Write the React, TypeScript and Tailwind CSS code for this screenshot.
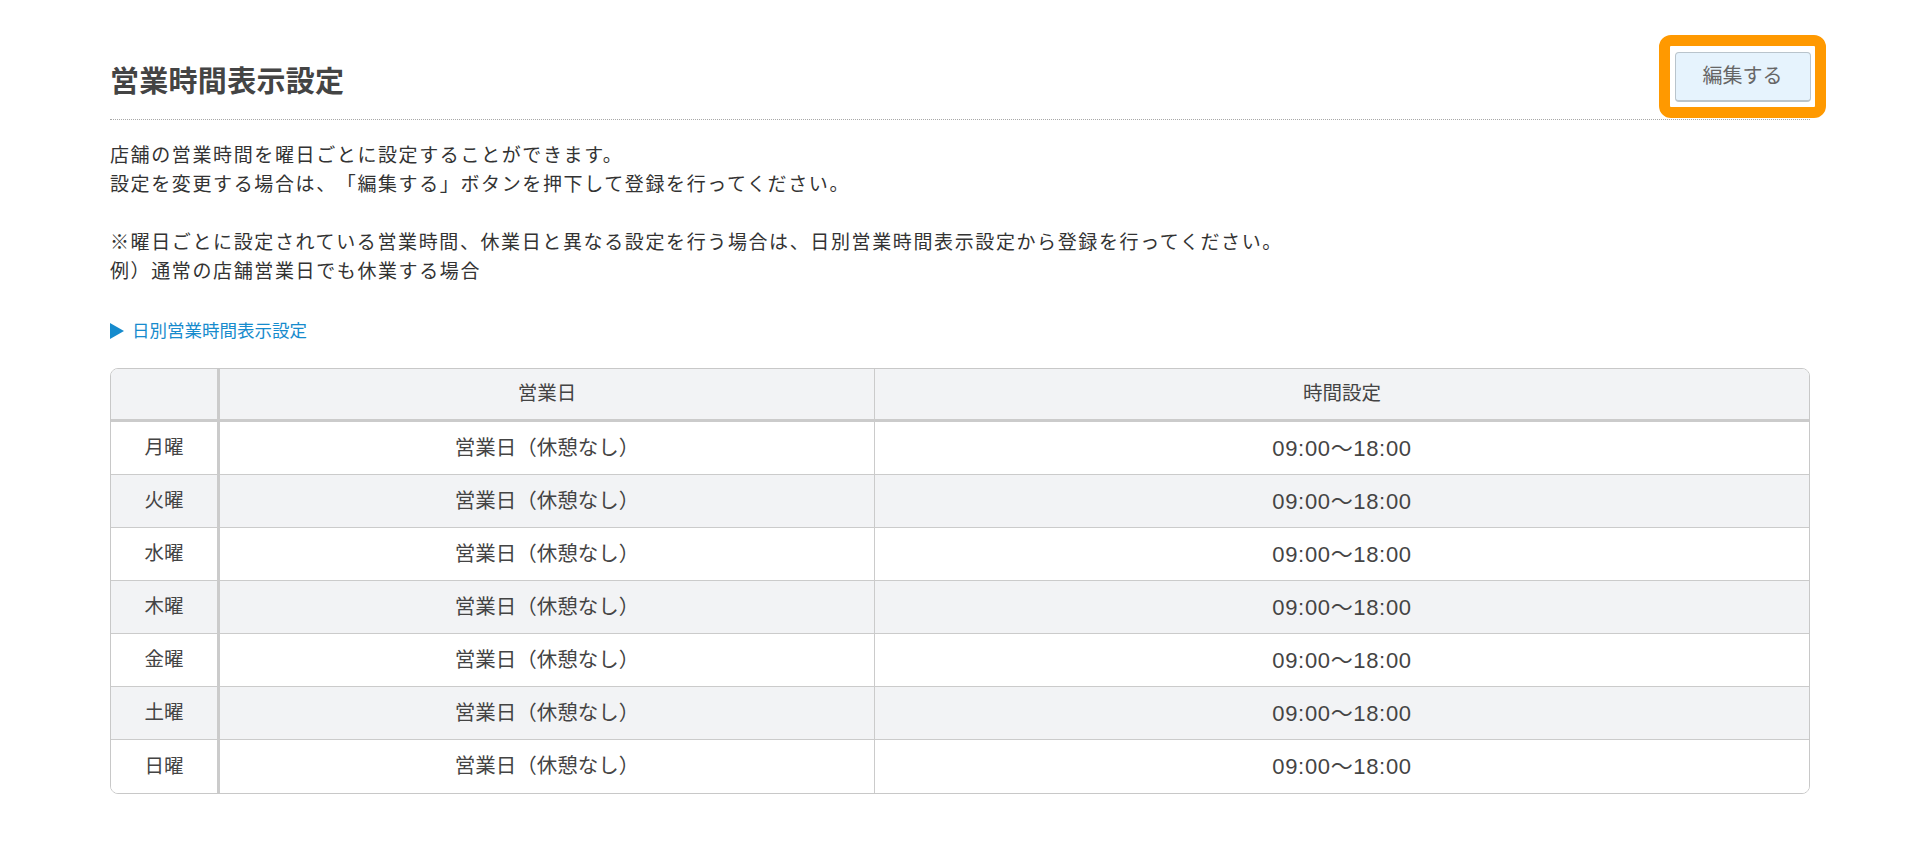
import React from 'react'

const days = ['月曜', '火曜', '水曜', '木曜', '金曜', '土曜', '日曜']

export default function App() {
  return (
    <div className="min-h-screen bg-white px-[110px] text-[#333] font-['Liberation_Sans','Noto_Sans_CJK_JP',sans-serif] [text-spacing-trim:space-all]">
      {/* 見出し */}
      <div className="flex items-end justify-between border-b border-dotted border-[#a8a8a8] pt-[35px]">
        <h1 className="mb-[22px] text-[29px] font-bold leading-none tracking-[0.01em] text-[#444]">
          営業時間表示設定
        </h1>
        <div className="-mr-[16px] mb-px flex h-[83px] w-[167px] items-center justify-center rounded-[12px] border-[11px] border-[#ff9900] bg-white">
          <button className="h-[50px] w-[136px] rounded-[4px] border border-b-2 border-[#b9c4cc] bg-[#e6f3fd] text-[20px] text-[#666]">
            編集する
          </button>
        </div>
      </div>

      {/* 説明 */}
      <div className="mt-[21px] text-[19px] leading-[29px] tracking-[0.085em]">
        <p>店舗の営業時間を曜日ごとに設定することができます。</p>
        <p>設定を変更する場合は、「編集する」ボタンを押下して登録を行ってください。</p>
        <p className="mt-[29px]">
          ※曜日ごとに設定されている営業時間、休業日と異なる設定を行う場合は、日別営業時間表示設定から登録を行ってください。
        </p>
        <p>例）通常の店舗営業日でも休業する場合</p>
      </div>

      <a href="#" className="mt-[33px] flex items-center gap-[8px] text-[17.5px] leading-[24px] text-[#168bcd]">
        <svg width="14" height="16" viewBox="0 0 14 16" className="shrink-0">
          <polygon points="0,0 14,8 0,16" fill="#168bcd" />
        </svg>
        日別営業時間表示設定
      </a>

      {/* 営業時間テーブル */}
      <div className="mt-[25px] overflow-hidden rounded-[8px] border border-[#c8c8c8]">
        <table className="w-full table-fixed border-separate border-spacing-0 text-[19.5px] text-[#444]">
          <thead>
            <tr className="h-[53px] bg-[#f2f3f5]">
              <th className="w-[109px] border-b-[3px] border-r-[3px] border-[#cbcbcb] font-normal"></th>
              <th className="w-[655px] border-b-[3px] border-r border-[#cbcbcb] font-normal">営業日</th>
              <th className="border-b-[3px] border-[#cbcbcb] font-normal">時間設定</th>
            </tr>
          </thead>
          <tbody>
            {days.map((d, i) => {
              const last = i === days.length - 1
              const rowBg = i % 2 === 1 ? 'bg-[#f2f3f5]' : 'bg-white'
              const bb = last ? '' : 'border-b'
              return (
                <tr key={d} className={`h-[53px] ${rowBg}`}>
                  <td className={`${bb} border-r-[3px] border-[#cbcbcb] text-center`}>{d}</td>
                  <td className={`${bb} border-r border-[#cbcbcb] text-center text-[20.5px]`}>営業日（休憩なし）</td>
                  <td className={`${bb} border-[#cbcbcb] text-center text-[22px] tracking-[0.03em]`}>09:00〜18:00</td>
                </tr>
              )
            })}
          </tbody>
        </table>
      </div>
    </div>
  )
}
